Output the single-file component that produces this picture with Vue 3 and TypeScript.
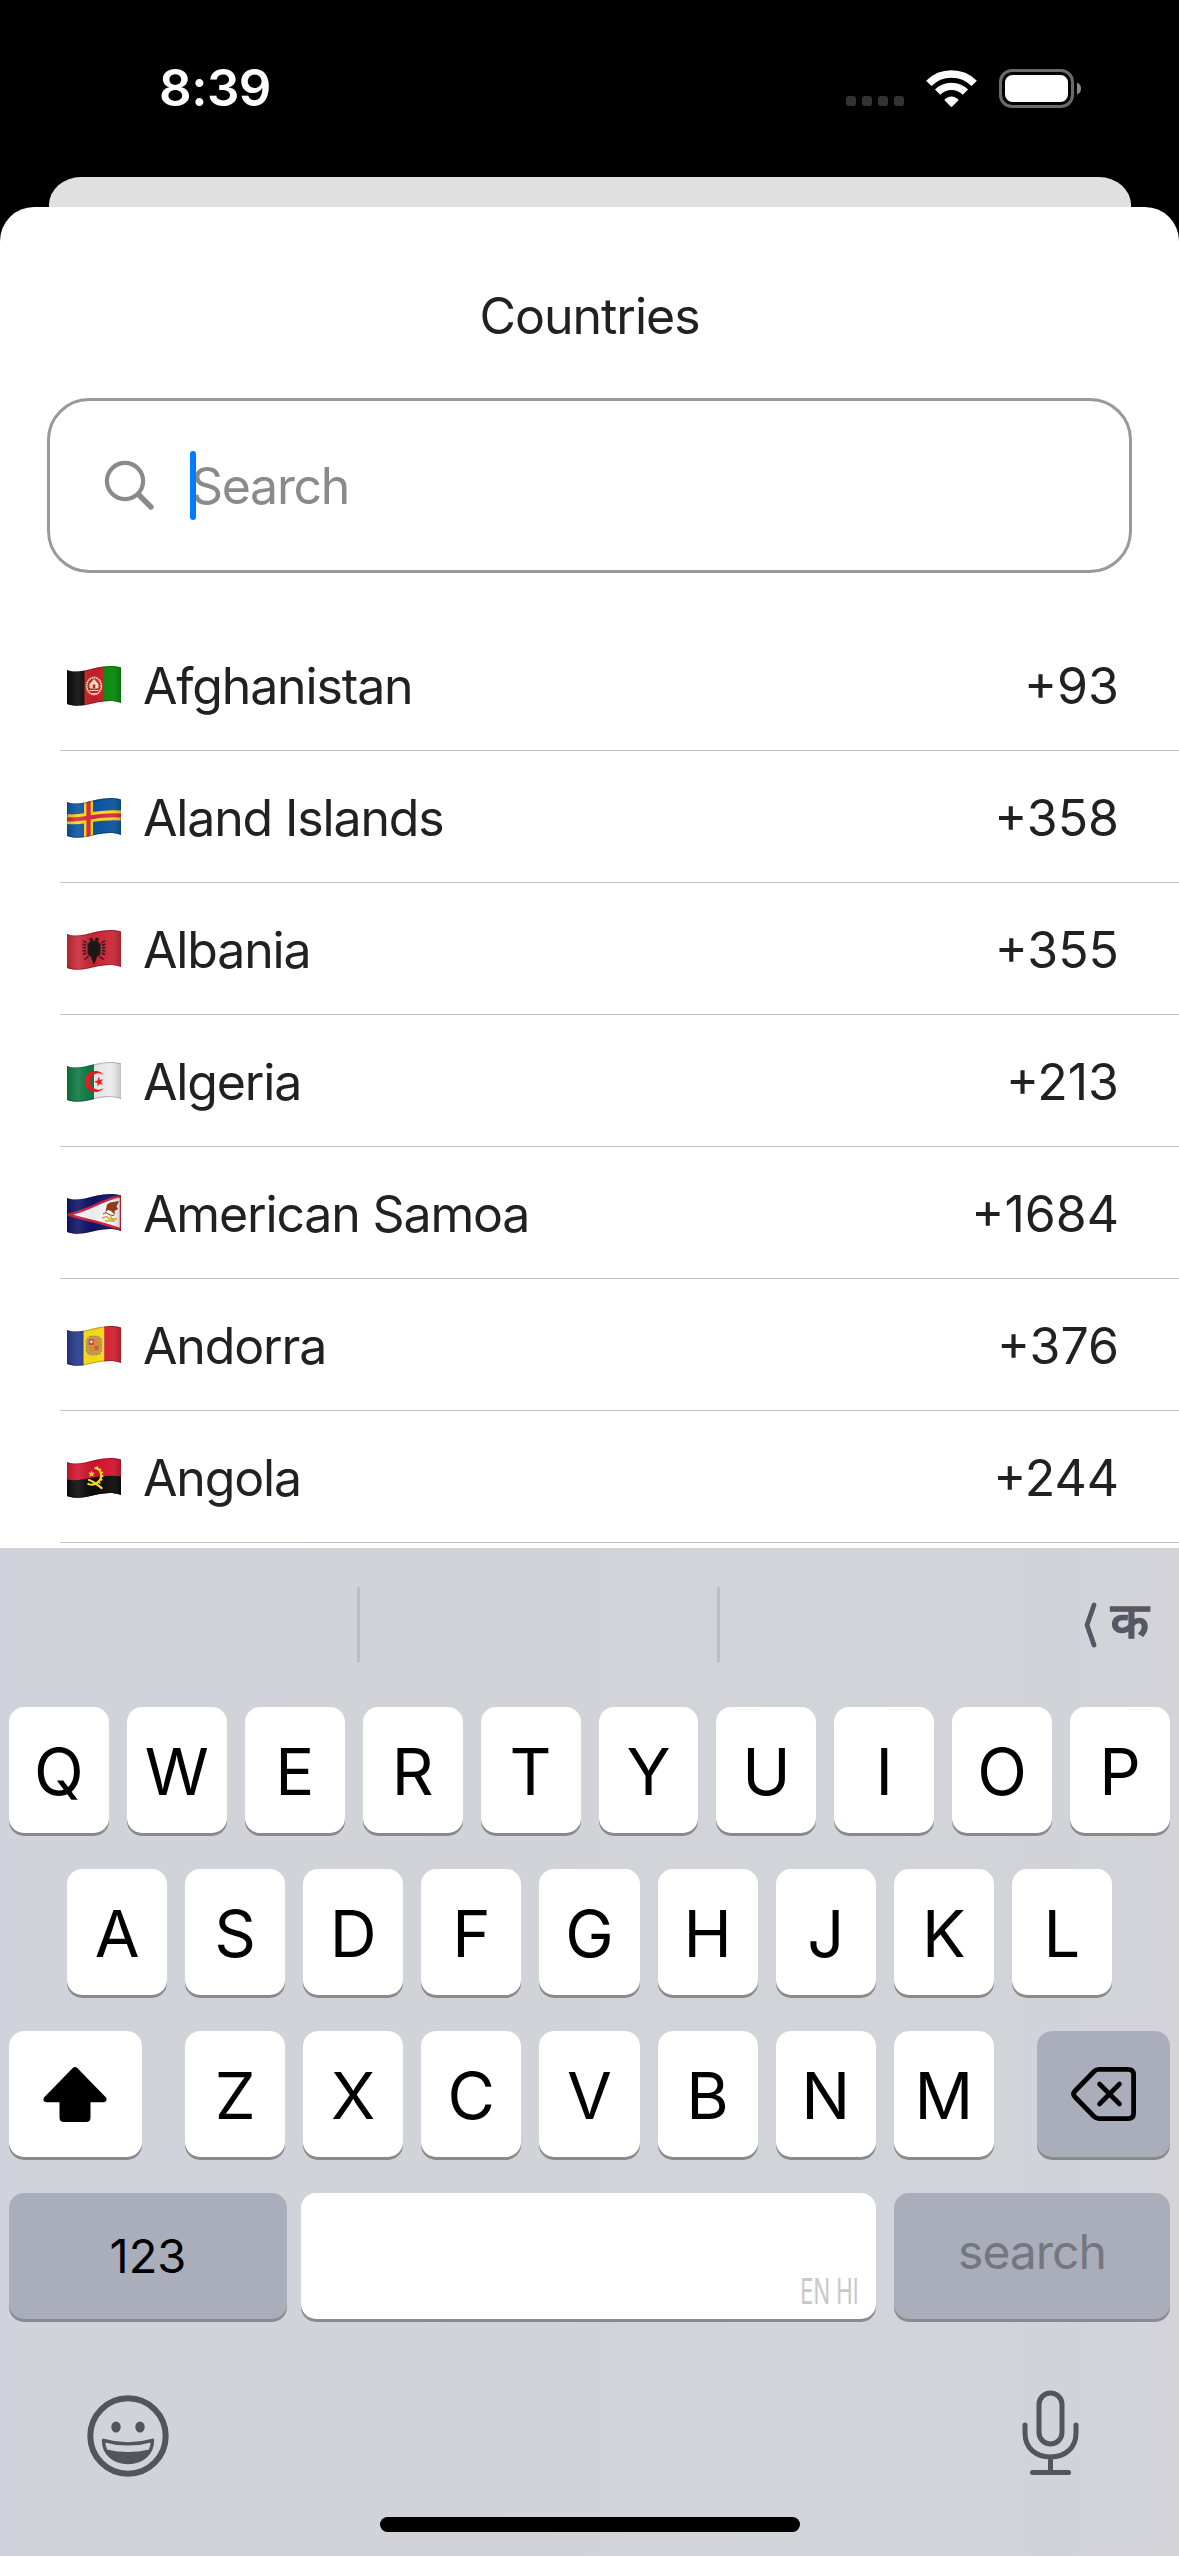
<script setup lang="ts">
interface Country {
  id: string
  name: string
  code: string
}

const countries: Country[] = [
  { id: 'af', name: 'Afghanistan', code: '+93' },
  { id: 'ax', name: 'Aland Islands', code: '+358' },
  { id: 'al', name: 'Albania', code: '+355' },
  { id: 'dz', name: 'Algeria', code: '+213' },
  { id: 'as', name: 'American Samoa', code: '+1684' },
  { id: 'ad', name: 'Andorra', code: '+376' },
  { id: 'ao', name: 'Angola', code: '+244' },
]

const topRow: string[] = 'QWERTYUIOP'.split('')
const midRow: string[] = 'ASDFGHJKL'.split('')
const lowRow: string[] = 'ZXCVBNM'.split('')
</script>

<template>
  <div class="screen">
    <header class="status">
      <span class="time">8:39</span>
      <div class="indicators">
        <div class="dots"><i v-for="n in 4" :key="n" /></div>
        <svg class="wifi" width="51" height="38" viewBox="0 0 51 38">
          <g fill="none" stroke="#fff">
            <path d="M2.8 13.4A32.2 32.2 0 0 1 48.2 13.4" stroke-width="7.6" />
            <path d="M11.6 22.2A19.6 19.6 0 0 1 39.4 22.2" stroke-width="7.4" />
          </g>
          <path d="M18.3 29.9C22.3 25.2 28.7 25.2 32.7 29.9L26.3 36.6Q25.5 37.4 24.7 36.6Z" fill="#fff" />
        </svg>
        <svg class="battery" width="83" height="39" viewBox="0 0 83 39">
          <rect x="1.5" y="1.5" width="72" height="36" rx="11.5" fill="none" stroke="#6b6b6b" stroke-width="3" />
          <rect x="6" y="6" width="63" height="27" rx="7.5" fill="#fff" />
          <path d="M78 13.5Q82 15 82 19.5T78 25.5Z" fill="#8a8a8a" />
        </svg>
      </div>
    </header>
    <div class="backsheet" />
    <main class="sheet">
      <h1 class="title">Countries</h1>
      <div class="search">
        <svg class="glass" width="54" height="54" viewBox="0 0 54 54" fill="none" stroke="#8a8a8e">
          <circle cx="22" cy="22" r="18.1" stroke-width="4.2" />
          <path d="M35.5 35.5L48 48" stroke-width="5.4" stroke-linecap="round" />
        </svg>
        <span class="placeholder">Search<i class="caret" /></span>
      </div>
      <ul class="list">
        <li v-for="c in countries" :key="c.id" class="row">
          <svg class="flag" width="54" height="40" viewBox="0 0 54 40">
            <defs>
              <clipPath :id="'wave-' + c.id">
                <path d="M0 4C5 6 11 6 18 4.5C29 2 40 -2 54 1.4V37C42 32.500 31 36.500 20 38.800C12 40.300 5 40 0 38Z" />
              </clipPath>
              <linearGradient :id="'shade-' + c.id" x1="0" x2="1">
                <stop offset="0" stop-color="#000" stop-opacity=".16" />
                <stop offset=".22" stop-color="#fff" stop-opacity=".1" />
                <stop offset=".5" stop-color="#000" stop-opacity=".04" />
                <stop offset=".78" stop-color="#fff" stop-opacity=".04" />
                <stop offset="1" stop-color="#000" stop-opacity=".18" />
              </linearGradient>
            </defs>
            <g :clip-path="`url(#wave-${c.id})`">
              <template v-if="c.id === 'af'">
                <rect width="18" height="40" fill="#080808" />
                <rect x="17.500" width="19.500" height="40" fill="#c8202a" />
                <rect x="36.500" width="18" height="40" fill="#068a0a" />
                <ellipse cx="27" cy="20" rx="7.300" ry="8.500" fill="none" stroke="#f3d9a6" stroke-width="1.800" stroke-dasharray="1.800 .5" />
                <path d="M23 22V18L27 13.500L31 18V22ZM22.500 24.500H31.500M24 27.500H30" fill="#f6e4c4" stroke="#f6e4c4" stroke-width="1" />
                <path d="M25.800 22V18.500H28.200V22Z" fill="#c8202a" />
              </template>
              <template v-else-if="c.id === 'ax'">
                <rect width="54" height="40" fill="#0b55a0" />
                <path d="M0 21C14 23.500 28 15.500 54 17.500" fill="none" stroke="#ffd51c" stroke-width="10" />
                <path d="M21.500 0V40" stroke="#ffd51c" stroke-width="9" />
                <path d="M0 21C14 23.500 28 15.500 54 17.500M21.500 0V40" fill="none" stroke="#d52b42" stroke-width="4.200" />
              </template>
              <template v-else-if="c.id === 'al'">
                <rect width="54" height="40" fill="#cb2736" />
                <path d="M27 12L25 7.500L21.500 9L23.500 10.500L22 13L20.500 13.500V24L22.500 26L24 26.500L25 30L27 34.500L29 30L30 26.500L31.500 26L33.500 24V13.500L32 13L30.500 10.500L32.500 9L29 7.500Z" fill="#1d1517" />
                <path d="M19.500 13L16 10.500M19 15.500L15.500 14M19 18L15.500 17.500M19 20.500L15.500 21M19 23L16 24.500M21.500 26.500L17.500 29.500M34.500 13L38 10.500M35 15.500L38.500 14M35 18L38.500 17.500M35 20.500L38.500 21M35 23L38 24.500M32.500 26.500L36.500 29.500" stroke="#1d1517" stroke-width="1.500" />
              </template>
              <template v-else-if="c.id === 'dz'">
                <rect width="27.500" height="40" fill="#0c7a42" />
                <rect x="27" width="27" height="40" fill="#ececec" />
                <path d="M36.900 13.200A10.500 10.500 0 1 0 36.900 25.800A8.300 8.300 0 1 1 36.900 13.200Z" fill="#f5141d" />
                <path d="M31.800 14.500L32.800 18L36.300 17.200L34 20L36 23L32.700 21.800L30.500 24.600V21L27 19.800L30.500 18.600Z" fill="#f5141d" />
              </template>
              <template v-else-if="c.id === 'as'">
                <rect width="54" height="40" fill="#0f1468" />
                <path d="M1 20.500C16 19 34 6 54 2V35.500C34 28 18 26 1 20.500Z" fill="#f6f6f6" stroke="#d21c38" stroke-width="2.500" />
                <path d="M38.500 18L40 10.500L43 8.500L52 7L49.500 12.500L51 15L47.500 17L48 21L44 17L41 16Z" fill="#8a3410" />
                <path d="M36 20L39 18.500L43 21L47 21.500" fill="none" stroke="#6a3521" stroke-width="1" />
                <path d="M35 24L40 22.500L42 25H50M38 27H48M43 21L46 27" fill="none" stroke="#d0a62c" stroke-width="1.400" />
              </template>
              <template v-else-if="c.id === 'ad'">
                <rect width="17" height="40" fill="#25388a" />
                <rect x="16.500" width="21" height="40" fill="#fddd18" />
                <rect x="37.200" width="17" height="40" fill="#d3202f" />
                <rect x="19.500" y="10.500" width="15" height="18" rx="5" fill="#c3a25b" stroke="#a98f62" stroke-width="1.600" stroke-dasharray="2 1" />
                <rect x="21.700" y="13" width="5" height="6" fill="#d9433a" />
                <rect x="27.500" y="12.500" width="5" height="6" fill="#e78b30" />
                <rect x="22" y="20" width="4.500" height="5.500" fill="#e88a2e" />
                <rect x="27.500" y="19.500" width="4.500" height="5" fill="#de622c" />
                <path d="M23 14.500H25.500V17H23Z" fill="#f1ded0" />
              </template>
              <template v-else>
                <rect width="54" height="40" fill="#d4142f" />
                <path d="M0 21.500C14 25 30 15 54 18.500V40H0Z" fill="#0b0b0b" />
                <path d="M27.500 10C35 10.500 36.500 20 30.500 24.500C27.500 27 23 27.500 20.500 25.500" fill="none" stroke="#ffe02c" stroke-width="2.200" />
                <path d="M29.500 9C37 11 38 21 31 26.500" fill="none" stroke="#ffe02c" stroke-width="1.500" stroke-dasharray="1.700 2" />
                <path d="M22 22C26 23 29 26 34.500 30" fill="none" stroke="#ffe02c" stroke-width="2.200" stroke-linecap="round" />
                <path d="M24.500 12.500L25.400 14.800H28L26 16.500L26.700 19L24.500 17.500L22.300 19L23 16.500L21.200 14.800H23.700Z" fill="#ffe02c" />
              </template>
              <rect width="54" height="40" :fill="`url(#shade-${c.id})`" />
              <path d="M0 4C5 6 11 6 18 4.500C29 2 40 -2 54 1.400M54 37C42 32.500 31 36.500 20 38.800C12 40.300 5 40 0 38" fill="none" stroke="#000" stroke-opacity=".22" stroke-width="2" />
            </g>
          </svg>
          <span class="name">{{ c.name }}</span>
          <span class="code">{{ c.code }}</span>
        </li>
      </ul>
    </main>
    <section class="keyboard">
      <div class="suggestions">
        <div class="slot" />
        <div class="slot" />
        <div class="slot last">
          <svg width="14" height="46" viewBox="0 0 14 46" fill="none" stroke="#565762" stroke-width="4.800" stroke-linecap="round" stroke-linejoin="round">
            <path d="M10 3L3 23L10 43" />
          </svg>
          <span class="hindi">क</span>
        </div>
      </div>
      <div class="keys">
        <div class="keyrow">
          <div v-for="k in topRow" :key="k" class="key">{{ k }}</div>
        </div>
        <div class="keyrow mid">
          <div v-for="k in midRow" :key="k" class="key">{{ k }}</div>
        </div>
        <div class="keyrow low">
          <div class="key wide shift">
            <svg width="66" height="58" viewBox="0 0 66 58">
              <path d="M30.500 3.200Q33 .8 35.500 3.200L64 32.500Q66 36.500 61.500 37.200H48.500V52.500Q48.500 57 44 57H22Q17.500 57 17.500 52.500V37.200H4.500Q0 36.500 2 32.500Z" fill="#000" />
            </svg>
          </div>
          <div class="letters">
            <div v-for="k in lowRow" :key="k" class="key">{{ k }}</div>
          </div>
          <div class="key wide grey">
            <svg width="66" height="56" viewBox="0 0 66 56" fill="none" stroke="#000" stroke-linecap="round" stroke-linejoin="round">
              <path d="M28 3.400H57Q62.600 3.400 62.600 9V47Q62.600 52.600 57 52.600H28Q25.200 52.600 23 50.500L4 31Q1.200 28 4 25L23 5.500Q25.200 3.400 28 3.400Z" stroke-width="4.800" />
              <path d="M28.500 18L48.500 38M48.500 18L28.500 38" stroke-width="4.600" />
            </svg>
          </div>
        </div>
        <div class="keyrow bottom">
          <div class="key grey num">123</div>
          <div class="key space"><span>EN HI</span></div>
          <div class="key grey go">search</div>
        </div>
      </div>
      <div class="tools">
        <svg class="emoji" width="82" height="82" viewBox="0 0 82 82" fill="none" stroke="#50565c">
          <circle cx="41" cy="41" r="37.700" stroke-width="6" />
          <ellipse cx="29" cy="32" rx="4.700" ry="5.500" fill="#50565c" stroke="none" />
          <ellipse cx="53" cy="32" rx="4.700" ry="5.500" fill="#50565c" stroke="none" />
          <path d="M16.500 45.300Q41 52.500 65.500 45.300C65.500 59 55 67.500 41 67.500S16.500 59 16.500 45.300Z" stroke-width="3.400" stroke-linejoin="round" />
          <path d="M19.500 54.500Q41 59.500 62.500 54.500C58.500 63 50.500 67 41 67S23.500 63 19.500 54.500Z" fill="#50565c" stroke="none" />
        </svg>
        <svg width="57" height="86" viewBox="0 0 57 86" fill="none" stroke="#50565c" stroke-width="5" stroke-linecap="round">
          <rect x="17" y="3" width="23" height="51" rx="11.500" />
          <path d="M3 35V43C3 58 14 67 28.500 67S54 58 54 43V35M28.500 67V82" />
          <path d="M10.500 82.500H46.500" />
        </svg>
      </div>
      <div class="home" />
    </section>
  </div>
</template>

<style>
html,
body {
  margin: 0;
  background: #000;
}
</style>

<style scoped>
.screen {
  width: 1179px;
  height: 2556px;
  display: flex;
  flex-direction: column;
  overflow: hidden;
  background: #000;
  font-family: Inter, "Liberation Sans", sans-serif;
  color: #212121;
}
.status {
  height: 177px;
  flex: none;
  box-sizing: border-box;
  padding: 0 97px 0 159px;
  display: flex;
  justify-content: space-between;
  align-items: center;
}
.time {
  color: #fff;
  font-size: 51px;
  font-weight: 600;
  line-height: 60px;
  letter-spacing: -0.5px;
  margin-bottom: 2px;
}
.indicators {
  display: flex;
  align-items: center;
}
.dots {
  display: flex;
  gap: 6px;
  margin: 25px 22px 0 0;
}
.dots i {
  width: 10px;
  height: 10px;
  border-radius: 3px;
  background: #333;
}
.wifi {
  margin-right: 22px;
}
.backsheet {
  flex: none;
  height: 30px;
  margin: 0 48px 0 49px;
  background: #e0e0e0;
  border-radius: 32px 32px 0 0 / 28px 28px 0 0;
}
.sheet {
  flex: none;
  height: 1341px;
  background: #fff;
  border-radius: 34px 34px 0 0;
  overflow: hidden;
}
.title {
  margin: 79px 0 0;
  text-align: center;
  font-size: 50px;
  line-height: 60px;
  font-weight: 400;
  letter-spacing: -1px;
}
.search {
  margin: 52px 47px 0;
  height: 175px;
  box-sizing: border-box;
  border: 3px solid #999;
  border-radius: 42px;
  display: flex;
  align-items: center;
  padding-left: 53px;
}
.glass {
  flex: none;
  margin-right: 34px;
}
.placeholder {
  position: relative;
  font-size: 50px;
  line-height: 60px;
  letter-spacing: -1.3px;
  color: #8a8a8e;
}
.caret {
  position: absolute;
  left: -1px;
  top: -5px;
  width: 6px;
  height: 69px;
  border-radius: 3px;
  background: #007aff;
}
.list {
  list-style: none;
  margin: 46px 0 0;
  padding: 0;
}
.row {
  margin-left: 60px;
  height: 132px;
  box-sizing: border-box;
  border-bottom: 1px solid #c6c6c8;
  padding: 3px 60px 0 7px;
  display: flex;
  align-items: center;
  font-size: 50px;
  line-height: 60px;
}
.flag {
  flex: none;
  margin-right: 22px;
}
.name {
  flex: 1;
  letter-spacing: -1.15px;
}
.keyboard {
  flex: none;
  height: 1008px;
  background: linear-gradient(90deg, #d0d3db 0%, #d1d3d8 35%, #d1d4d9 70%, #d3d3d8 100%);
  display: flex;
  flex-direction: column;
  align-items: center;
  color: #000;
}
.suggestions {
  align-self: stretch;
  height: 159px;
  display: flex;
  align-items: center;
}
.slot {
  box-sizing: border-box;
  width: 360px;
  height: 75px;
  margin-top: -6px;
  border-right: 3px solid #bbbdc2;
}
.slot.last {
  flex: 1;
  border: 0;
  padding-right: 30px;
  display: flex;
  justify-content: flex-end;
  align-items: center;
  gap: 12px;
  color: #565762;
}
.hindi {
  font-size: 49px;
  line-height: 60px;
  font-weight: 500;
  font-family: "Noto Sans Devanagari", "Noto Sans", sans-serif;
  -webkit-text-stroke: 1.3px #565762;
  padding-top: 3px;
}
.keys {
  align-self: stretch;
  padding: 0 9px;
  display: flex;
  flex-direction: column;
  gap: 36px;
}
.keyrow {
  display: flex;
  gap: 18px;
  height: 126px;
}
.mid {
  padding: 0 58px;
}
.low {
  gap: 43px;
}
.letters {
  flex: 1;
  display: flex;
  gap: 18px;
}
.key {
  flex: 1;
  min-width: 0;
  display: flex;
  align-items: center;
  justify-content: center;
  box-sizing: border-box;
  padding-top: 3px;
  border-radius: 15px;
  background: #fff;
  box-shadow: 0 3px 0 #898a8d;
  font-size: 65px;
  line-height: 80px;
}
.wide {
  flex: none;
  width: 133px;
  padding: 0;
}
.shift {
  padding: 0 2px 1px 0;
}
.grey {
  background: #aaaeba;
}
.bottom {
  gap: 0;
}
.num {
  flex: none;
  width: 278px;
  font-size: 47px;
  padding: 0;
}
.space {
  flex: none;
  width: 575px;
  margin: 0 18px 0 14px;
  justify-content: flex-end;
  align-items: flex-end;
  padding: 0 17px 8px 0;
}
.space span {
  font-size: 35px;
  line-height: 40px;
  font-weight: 400;
  color: #c8c8c8;
  transform: scaleX(0.63);
  transform-origin: right center;
  white-space: nowrap;
}
.go {
  font-size: 48px;
  letter-spacing: -1px;
  color: #74777f;
  padding: 0 0 9px;
}
.tools {
  align-self: stretch;
  height: 86px;
  margin-top: 71px;
  padding: 0 100px 0 87px;
  display: flex;
  justify-content: space-between;
  align-items: center;
}
.emoji {
  margin-top: 6px;
}
.home {
  width: 420px;
  height: 15px;
  border-radius: 8px;
  background: #000;
  margin-top: 41px;
}
</style>
